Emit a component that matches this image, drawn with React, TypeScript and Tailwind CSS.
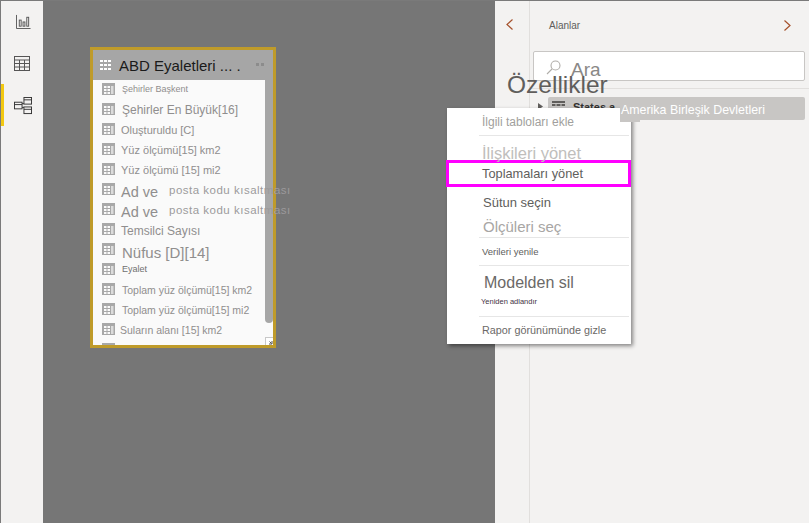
import React from 'react';

const FONT = 'font-["Liberation_Sans",Arial,sans-serif]';

const TableIcon = ({className}: {className?: string}) => (
    <svg viewBox="0 0 13 12" className={className} fill="none">
        <rect x="0" y="0" width="13" height="12" fill="#a8a8a8" />
        <rect x="2" y="3" width="2.5" height="2" fill="#fafafa" />
        <rect x="5.5" y="3" width="2.5" height="2" fill="#fafafa" />
        <rect x="2" y="6" width="2.5" height="2" fill="#fafafa" />
        <rect x="5.5" y="6" width="2.5" height="2" fill="#fafafa" />
        <rect x="2" y="9" width="2.5" height="2" fill="#fafafa" />
        <rect x="5.5" y="9" width="2.5" height="2" fill="#fafafa" />
        <rect x="9" y="3" width="2.5" height="8" fill="#dcdcdc" />
    </svg>
);

const fields = [
    {label: 'Şehirler Başkent', cls: 'text-[9px] ml-[7px]'},
    {label: 'Şehirler En Büyük[16]', cls: 'text-[12px] ml-[7px] pt-[2px]'},
    {label: 'Oluşturuldu [C]', cls: 'text-[11px] ml-[6px] pt-[3px]'},
    {label: 'Yüz ölçümü[15] km2', cls: 'text-[11px] ml-[6px] pt-[3px]'},
    {label: 'Yüz ölçümü [15] mi2', cls: 'text-[11px] ml-[6px] pt-[3px]'},
    {label: 'Ad ve', cls: 'text-[14.5px] ml-[6px] pt-[6px]'},
    {label: 'Ad ve', cls: 'text-[14.5px] ml-[6px] pt-[6px]'},
    {label: 'Temsilci Sayısı', cls: 'text-[12px] ml-[6px] pt-[3px]'},
    {label: 'Nüfus [D][14]', cls: 'text-[15px] ml-[7px] pt-[6px]'},
    {label: 'Eyalet', cls: 'text-[9px] ml-[7px] text-[#707070]'},
    {label: 'Toplam yüz ölçümü[15] km2', cls: 'text-[10.5px] ml-[7px] pt-[2px]'},
    {label: 'Toplam yüz ölçümü[15] mi2', cls: 'text-[10.5px] ml-[7px] pt-[2px]'},
    {label: 'Suların alanı [15] km2', cls: 'text-[10.5px] ml-[5px] pt-[2px]'},
];

const Divider = () => <div className="h-px ml-[32px] mr-[2px] bg-[#e6e6e6]" />;

const App = () => {
    return (
        <div className={`relative flex w-[809px] h-[523px] overflow-hidden border-t border-l border-[#7a7a7a] ${FONT}`}>
            {/* Left rail */}
            <div className="relative w-[42px] shrink-0 bg-[#f3f2f1] flex flex-col items-center pt-[13px] gap-[27px]">
                <div className="absolute left-0 top-[83px] w-[3px] h-[42px] bg-[#f2c811]" />
                <svg width="15" height="15" viewBox="0 0 16 16" fill="none" stroke="#555" strokeWidth="1" className="ml-[2px]">
                    <path d="M.5 1v14.5h15" />
                    <rect x="3.5" y="6.5" width="2" height="6.5" />
                    <rect x="7.5" y="8.5" width="2" height="4.5" />
                    <rect x="11.5" y="3.5" width="2" height="9.5" />
                </svg>
                <svg width="16" height="16" viewBox="0 0 16 16" fill="none" stroke="#555" strokeWidth="1">
                    <rect x=".5" y=".5" width="15" height="14" />
                    <path d="M.5 4h15M.5 7.5h15M.5 11h15M5.5 4v11M10.5 4v11" />
                </svg>
                <svg width="18" height="18" viewBox="0 0 19 19" fill="none" stroke="#333" strokeWidth="1" className="-mt-[2px] ml-[2px]">
                    <rect x=".5" y="5.5" width="8" height="7" />
                    <rect x="10.5" y=".5" width="8" height="7" />
                    <rect x="10.5" y="10.5" width="8" height="7" />
                    <path d="M.5 8h8M10.5 3h8M10.5 13h8M8.5 7h2M8.5 11h2" />
                </svg>
            </div>

            {/* Model canvas */}
            <div className="relative w-[452px] shrink-0 bg-[#767676]">
                <div className="absolute left-[47px] top-[46px] w-[186px] h-[301px] border-[3px] border-[#bf9b2a] bg-[#fafafa]">
                    <div className="flex items-center h-[30px] bg-[#a6a6a6] pl-[7px] pr-[9px]">
                        <svg width="11" height="10" viewBox="0 0 11 10" fill="#fff">
                            <path d="M0 0h3v2H0zM4 0h3v2H4zM8 0h3v2H8zM0 4h3v2H0zM4 4h3v2H4zM8 4h3v2H8zM0 8h3v2H0zM4 8h3v2H4zM8 8h3v2H8z" />
                        </svg>
                        <span className="ml-[8px] text-[15px] leading-none text-[#1a1a1a] whitespace-nowrap">ABD Eyaletleri ... .</span>
                        <span className="ml-auto flex gap-[2px] mb-[2px]">
                            <i className="w-[3px] h-[3px] bg-[#8c8c8c]" />
                            <i className="w-[3px] h-[3px] bg-[#8c8c8c]" />
                        </span>
                    </div>
                    <div className="relative h-[265px] overflow-hidden pl-[9px] pr-[11px]">
                        <div className="-mt-px">
                            {fields.map((field, i) => (
                                <div key={i} className="flex items-center h-[20px] text-[#908e8e] whitespace-nowrap">
                                    <TableIcon className="w-[13px] h-[12px] shrink-0" />
                                    <span className={`${field.cls} leading-none`}>{field.label}</span>
                                </div>
                            ))}
                            <TableIcon className="w-[13px] h-[12px] mt-[4px]" />
                        </div>
                        <div className="absolute right-0 top-0 w-[8px] h-[243px] rounded-b-[4px] bg-[#a6a6a6]" />
                        <div className="absolute right-0 bottom-0 w-[8px] h-[8px] border-l border-t border-[#c8c8c8] bg-white">
                            <svg width="7" height="7" viewBox="0 0 7 7" fill="none" stroke="#555" strokeWidth="1"><path d="M6 3v3H3M5.5 5.5l-2-2" /></svg>
                        </div>
                    </div>
                    {/* long labels run past the card edge */}
                    <span className="absolute left-[76px] top-[135px] text-[11.5px] leading-none tracking-[0.5px] text-[#9c9a9c] whitespace-nowrap">posta kodu kısaltması</span>
                    <span className="absolute left-[76px] top-[155px] text-[11.5px] leading-none tracking-[0.5px] text-[#9c9a9c] whitespace-nowrap">posta kodu kısaltması</span>
                </div>
            </div>

            {/* Right panel */}
            <div className="relative flex-1 bg-[#f3f2f1] flex">
                <div className="w-[35px] shrink-0 border-r border-[#e1dfdd] pt-[18px] pl-[11px]">
                    <svg width="7" height="11" viewBox="0 0 7 11" fill="none" stroke="#a5512b" strokeWidth="1.2"><path d="M6.5 .5 1 5.5l5.5 5" /></svg>
                </div>
                <div className="flex-1 min-w-0 pl-[3px]">
                    <div className="flex items-center justify-between h-[50px] pl-[16px] pr-[18px] pb-[2px]">
                        <span className="text-[10px] text-[#605e5c]">Alanlar</span>
                        <svg width="7" height="11" viewBox="0 0 7 11" fill="none" stroke="#a5512b" strokeWidth="1.2"><path d="M.5 .5 6 5.5l-5.5 5" /></svg>
                    </div>
                    <div className="flex h-[30px] mr-[4px] items-center bg-white border border-[#c8c6c4] rounded-[2px] pl-[12px]">
                        <svg width="15" height="15" viewBox="0 0 15 15" fill="none" stroke="#b0ada9" strokeWidth="1.1" className="mt-[3px]"><circle cx="9.5" cy="5.5" r="4.5" /><path d="M6 9 1 14" /></svg>
                        <span className="ml-[10px] mt-[7px] text-[19px] leading-none text-[#8a8886]">Ara</span>
                    </div>
                    <div className="mt-[7px] -ml-[3px] h-px bg-[#e1dfdd]" />
                    <div className="relative mt-[8px] ml-[15px] mr-[4px] h-[23px] rounded-[2px] bg-[#c8c6c4] flex items-center pl-[4px]">
                        <svg width="13" height="10" viewBox="0 0 13 10" fill="#605e5c" className="mb-[6px]"><path d="M0 0h13v2H0zM0 3h3.5v2H0zM4.5 3h4v2h-4zM9.5 3H13v2H9.5z" /></svg>
                        <span className="ml-[8px] mb-[3px] text-[11px] font-bold leading-none text-[#323130]">States a</span>
                    </div>
                </div>
                <span className="absolute left-[12px] top-[72px] text-[24.5px] leading-none text-[#605e5c] whitespace-nowrap">Özellikler</span>
                <svg width="5" height="7" viewBox="0 0 5 7" fill="#605e5c" className="absolute left-[43px] top-[102px]"><path d="M0 0 5 3.5 0 7z" /></svg>
            </div>

            {/* Context menu */}
            <div className="absolute left-[446px] top-[107px] w-[184px] h-[236px] bg-white shadow-[2px_2px_4px_rgba(0,0,0,0.45)]">
                <div className="h-[27px] flex items-center pl-[35px] pt-[1px] text-[12px] leading-none text-[#a19f9d]">İlgili tabloları ekle</div>
                <Divider />
                <div className="h-[24px] flex items-center pl-[35px] pt-[10px] text-[16.5px] leading-none text-[#c0bebc]">İlişkileri yönet</div>
                <div className="h-[27px] -ml-px border-[3px] border-[#ff00ff] flex items-center pl-[33px] pt-[1px] text-[12.8px] leading-none text-[#605e5c]">Toplamaları yönet</div>
                <div className="h-[30px] flex items-center pl-[36px] text-[13px] leading-none text-[#605e5c]">Sütun seçin</div>
                <div className="h-[20px] flex items-center pl-[36px] pb-[2px] text-[15px] leading-none text-[#a8a6a4]">Ölçüleri seç</div>
                <Divider />
                <div className="h-[27px] flex items-center pl-[35px] text-[9.5px] leading-none text-[#605e5c]">Verileri yenile</div>
                <Divider />
                <div className="h-[29px] flex items-center pl-[37px] pt-[5px] text-[16px] leading-none text-[#6b6967]">Modelden sil</div>
                <div className="h-[21px] flex items-center pl-[34px] pb-[8px] text-[7.5px] leading-none text-[#3f3345]">Yeniden adlandır</div>
                <Divider />
                <div className="h-[27px] flex items-center pl-[35px] text-[10.8px] leading-none text-[#6b6967]">Rapor görünümünde gizle</div>
            </div>

            {/* tooltip tile over the menu corner */}
            <div className="absolute left-[619px] top-[97px] w-[20px] h-[24px] bg-[#c8c6c4] flex items-center pl-[1px] text-[12.4px] leading-none text-white whitespace-nowrap">
                Amerika Birleşik Devletleri
            </div>
        </div>
    );
};

export default App;
